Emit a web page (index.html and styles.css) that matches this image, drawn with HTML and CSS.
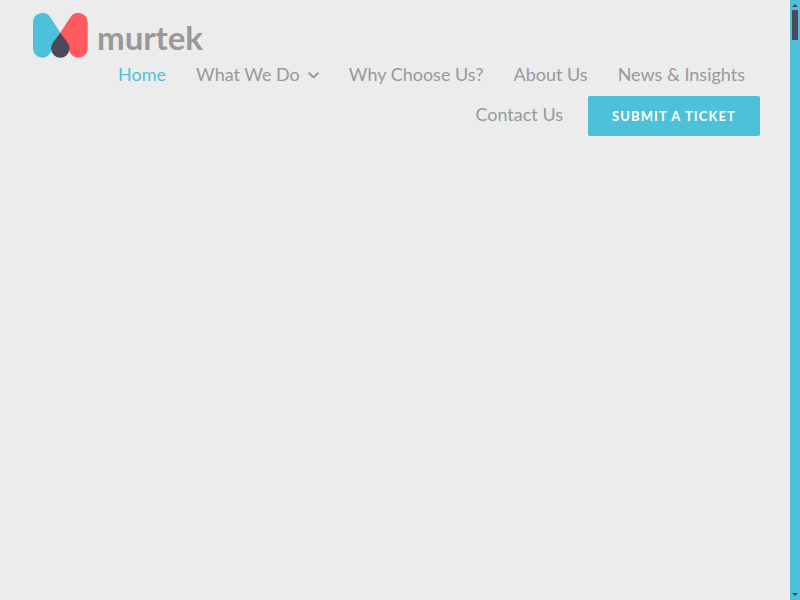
FILE: index.html
```html
<!DOCTYPE html>
<html lang="en">
<head>
    <meta charset="UTF-8">
    <meta name="viewport" content="width=device-width, initial-scale=1.0">
    <title>Murtek</title>
    <link rel="stylesheet" href="styles.css">
</head>
<body>
    <div class="page">
        <header class="site-header">
            <a class="logo" href="#">
                <svg class="logo-mark" width="55" height="46" viewBox="0 0 55 46">
                    <path fill="#4dc1da" d="M0 9.500A9.500 9.500 0 0 1 17.200 3.900L27.300 19.700V30L18.600 35.500A9.300 9.300 0 0 1 0 35.500z"/>
                    <path fill="#ff5a5f" d="M54.700 9.500A9.500 9.500 0 0 0 37.500 3.900L27.300 19.700V30L36.100 35.500A9.300 9.300 0 0 0 54.700 35.500z"/>
                    <path fill="#4a4a5a" d="M27.300 19.700L34.500 29.500A9.300 9.300 0 1 1 20.100 29.500z"/>
                </svg>
                <span class="logo-text">murtek</span>
            </a>
            <nav class="main-nav">
                <a class="nav-link active" href="#">Home</a>
                <a class="nav-link" href="#">What We Do<svg class="chevron" width="11" height="7" viewBox="0 0 11 7"><path d="M1.200 1.200l4.300 4.200 4.300-4.200" fill="none" stroke="#999" stroke-width="2" stroke-linecap="round" stroke-linejoin="round"/></svg></a>
                <a class="nav-link" href="#">Why Choose Us?</a>
                <a class="nav-link" href="#">About Us</a>
                <a class="nav-link" href="#">News &amp; Insights</a>
                <a class="nav-link" href="#">Contact Us</a>
                <a class="ticket-btn" href="#">SUBMIT A TICKET</a>
            </nav>
        </header>
    </div>
    <div class="scrollbar">
        <span class="arrow up"></span>
        <span class="thumb"></span>
        <span class="arrow down"></span>
    </div>
</body>
</html>
```

FILE: styles.css
```css
* {
    box-sizing: border-box;
}
html, body {
    height: 100%;
}
body {
    margin: 0;
    display: flex;
    overflow: hidden;
    font-family: Lato, "Open Sans", sans-serif;
    background-color: #ececec;
}
.page {
    flex: 1;
}
.site-header {
    padding: 13px 30px 0 33px;
}
a {
    text-decoration: none;
}
.logo {
    display: flex;
    align-items: center;
    height: 46px;
}
.logo-mark {
    display: block;
}
.logo-text {
    margin-left: 9px;
    margin-top: 1px;
    font-size: 33px;
    font-weight: 700;
    color: #999;
}
.main-nav {
    display: flex;
    flex-wrap: wrap;
    justify-content: flex-end;
    align-items: center;
    margin-top: -3px;
}
.nav-link {
    display: flex;
    align-items: center;
    height: 40px;
    padding: 0 15px 4px;
    font-size: 18px;
    white-space: nowrap;
    color: #999;
}
.nav-link.active {
    color: #4dc1da;
}
.chevron {
    margin-left: 8px;
    margin-top: 2px;
}
.ticket-btn {
    display: flex;
    align-items: center;
    justify-content: center;
    width: 172px;
    height: 40px;
    margin-left: 10px;
    border-radius: 2px;
    background-color: #4dc1da;
    color: white;
    font-size: 13px;
    font-weight: 700;
    letter-spacing: 1.1px;
}
.scrollbar {
    position: relative;
    width: 10px;
    background-color: #4dc1da;
}
.thumb {
    position: absolute;
    top: 10px;
    left: 2px;
    width: 6px;
    height: 30px;
    background-color: #4a4a5a;
}
.arrow {
    position: absolute;
    left: 2px;
    width: 0;
    height: 0;
    border-left: 3px solid transparent;
    border-right: 3px solid transparent;
}
.arrow.up {
    top: 4px;
    border-bottom: 3px solid #4a4a5a;
}
.arrow.down {
    bottom: 4px;
    border-top: 3px solid #4a4a5a;
}
```
